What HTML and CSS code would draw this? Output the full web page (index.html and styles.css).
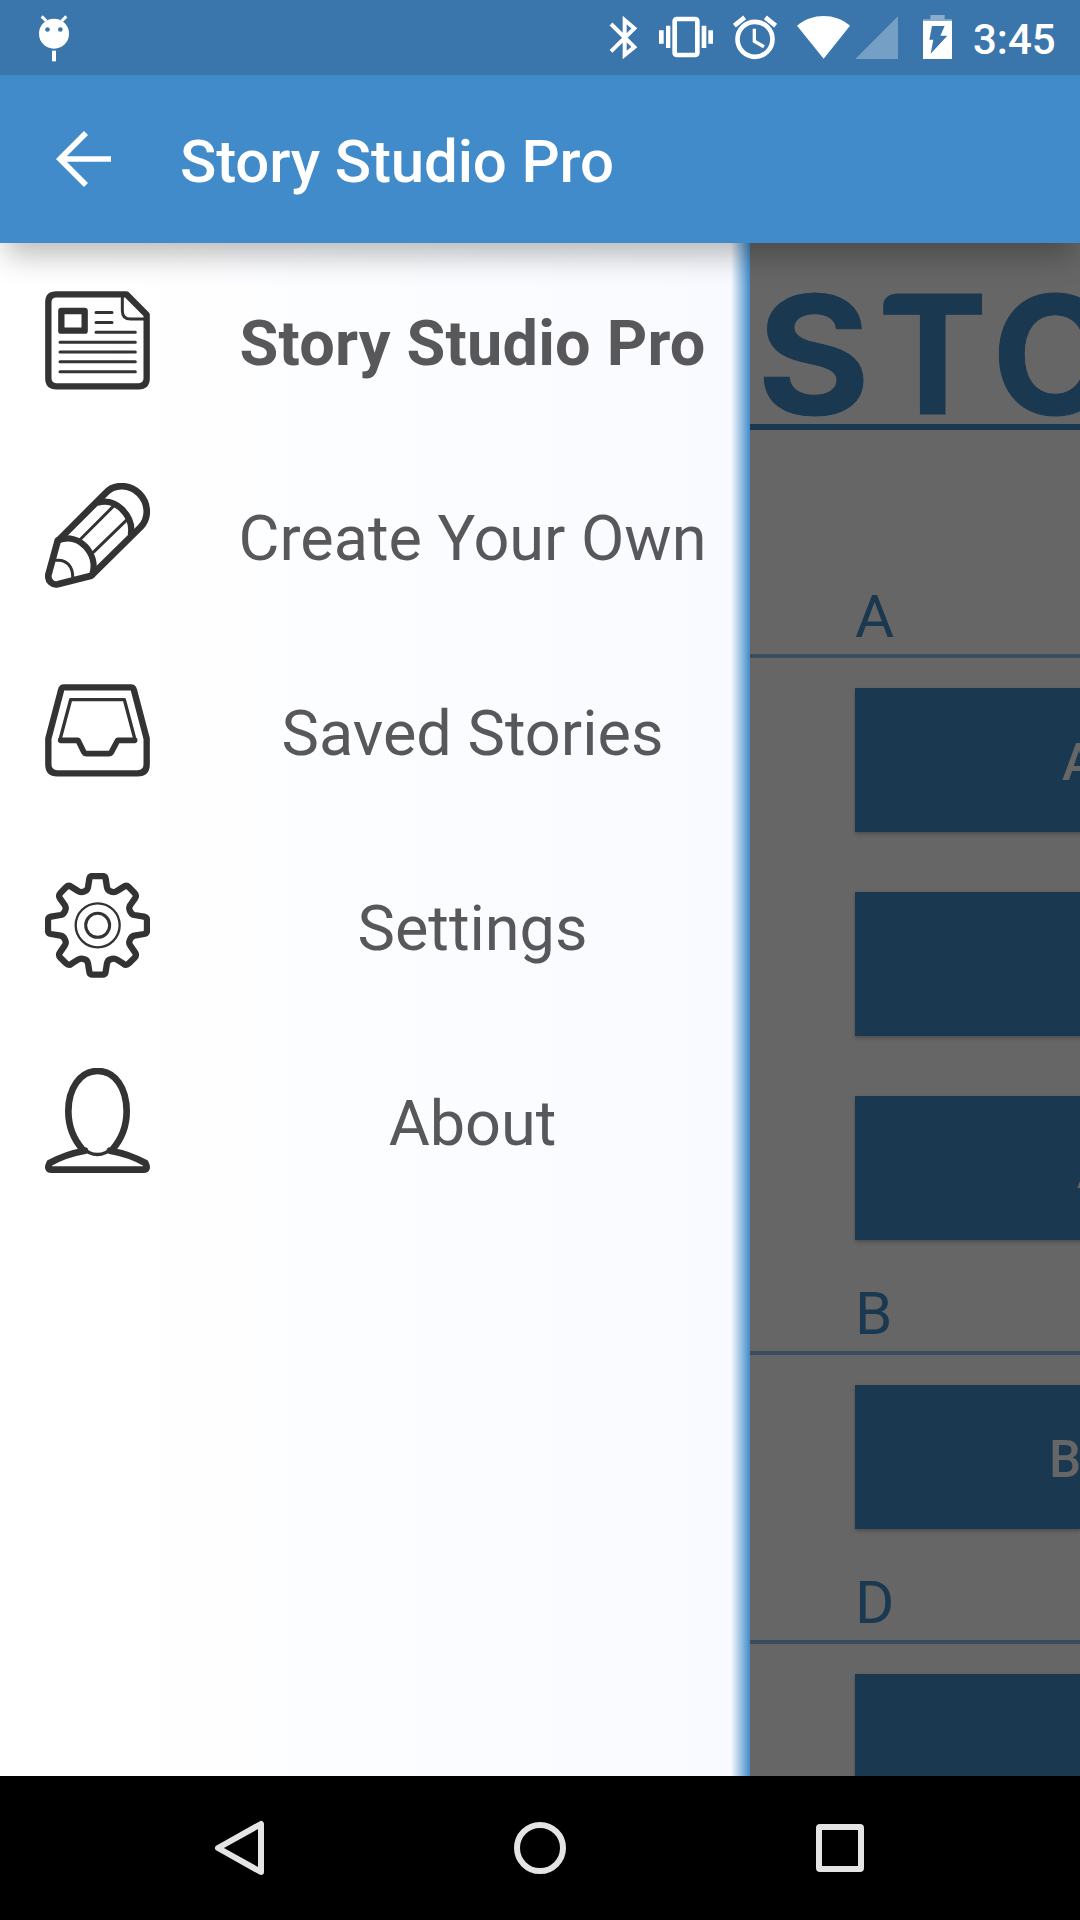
FILE: index.html
```html
<!DOCTYPE html>
<html lang="en">
<head>
<meta charset="utf-8">
<title>Story Studio Pro</title>
<link rel="stylesheet" href="styles.css">
</head>
<body>
<div class="screen">
  <header class="top">
    <div class="status">
      <svg class="debug" viewBox="108 0 108 225" fill="#fff"><circle cx="162" cy="101" r="45"/><path d="M125 49l14 14M199 49l-14 14" stroke="#fff" stroke-width="9"/><path d="M156 152h12v32h-12z"/><circle cx="142.500" cy="88.500" r="7" fill="#3a76ac"/><circle cx="181" cy="88.500" r="7" fill="#3a76ac"/></svg>
      <div class="tray">
        <svg class="bluetooth" viewBox="84 0 90 225" fill="none" stroke="#fff" stroke-width="12"><path d="M93 72l70 69-29 24V60l29 25-70 69"/></svg>
        <svg class="vibrate" viewBox="231 0 174 225" fill="#fff"><rect x="284" y="57" width="68" height="108" rx="6" fill="none" stroke="#fff" stroke-width="14"/><path d="M237 91h14v40h-14zM258 77h13v67h-13zM365 77h14v67h-14zM385 91h14v40h-14z"/></svg>
        <svg class="alarm" viewBox="459 0 132 225" fill="none" stroke="#fff"><circle cx="525" cy="118" r="52.500" stroke-width="14"/><path d="M463 77l31-25M587 77l-31-25" stroke-width="14"/><path d="M523 86v38l29 16" stroke-width="10"/></svg>
        <svg class="wifi" viewBox="648 0 165 225" fill="#fff"><path d="M651 77C673 58 702 48 731 48s57 10 79 29l-79 99z"/></svg>
        <svg class="signal" viewBox="825 0 132 225" fill="#fff"><path d="M954 49v128H826z" opacity=".3"/></svg>
        <svg class="battery" viewBox="1026 0 93 225"><path d="M1051 45h43v13h22v6h-87v-6h22z" fill="#fff" opacity=".4"/><path d="M1029 63h87v114h-87z" fill="#fff"/><path d="M1056 78h38l-13 29h21l-50 54 8-42h-12z" fill="#3a76ac"/></svg>
        <span class="clock">3:45</span>
      </div>
    </div>
    <div class="appbar">
      <svg class="back" viewBox="168 225 168 504" fill="none" stroke="#fff" stroke-width="17"><path d="M333 477H186M258 399l-78 78 78 78"/></svg>
      <h1 class="title">Story Studio Pro</h1>
    </div>
  </header>
  <main class="body">
    <nav class="drawer">
      <a class="item active">
        <svg class="icon" viewBox="45 54 315 315"><path d="M77 73H289l61 61V325q0 24-24 24H79q-24 0-24-24V97q0-24 24-24z" stroke-width="19"/><path d="M277 76v46q0 25 25 25h45" stroke-width="9"/><rect x="94" y="123" width="70" height="59" stroke-width="19"/><path d="M198 127.500h48M198 157.500h48M198 187h118M90 216.500h226M90 246h226M90 275.500h226M90 305h226" stroke-width="9"/></svg>
        <span class="label">Story Studio Pro</span>
      </a>
      <a class="item">
        <svg class="icon" viewBox="45 39 315 315"><path d="M83 213L226 70C252 40 300 42 328 71s30 73 4 100L184 317 83 343C68 346 53 334 55 315z" stroke-width="20"/><path d="M206 97c28-6 51 2 70 21s31 44 27 72" stroke-width="19"/><path d="M84 211c32-12 62-3 82 18s31 52 21 85" stroke-width="19"/><path d="M152 207L249 110M192 245L291 149M78 271c32-4 52 20 50 54" stroke-width="9"/></svg>
        <span class="label">Create Your Own</span>
      </a>
      <a class="item">
        <svg class="icon" viewBox="45 24 315 315"><path d="M102 52h200q8 0 10 9l38 145v77q0 27-27 27H82q-27 0-27-27v-77L93 61q2-9 9-9z" stroke-width="19"/><path d="M90 209L122 89h161l32 120" stroke-width="10"/><path d="M92 211h52l17 34q3 6 9 6h66q6 0 9-6l18-34h51" stroke-width="17"/></svg>
        <span class="label">Saved Stories</span>
      </a>
      <a class="item">
        <svg class="icon" viewBox="45 39 315 315"><path d="M188 48h29q9 0 10 9l4 25q2 9 10 12 12 5 20-1l19-12q9-7 17 1l16 16q8 8 2 17l-14 20q-6 8-1 18 4 10 13 12l29 5q9 2 9 11v30q0 9-9 11l-29 5q-9 2-13 12-5 10 1 18l14 20q6 9-2 17l-16 16q-8 8-17 1l-19-12q-8-6-20-1-8 3-10 12l-4 25q-1 9-10 9h-29q-9 0-10-9l-4-25q-2-9-10-12-12-5-20 1l-19 12q-9 7-17-1l-16-16q-8-8-2-17l14-20q6-8 1-18-4-10-13-12l-29-5q-9-2-9-11v-30q0-9 9-11l29-5q9-2 13-12 5-10-1-18l-14-20q-6-9 2-17l16-16q8-8 17-1l19 12q8 6 20 1 8-3 10-12l4-25q1-9 10-9z" stroke-width="19"/><circle cx="203" cy="196" r="66" stroke-width="7"/><circle cx="203" cy="196" r="36" stroke-width="9"/></svg>
        <span class="label">Settings</span>
      </a>
      <a class="item">
        <svg class="icon" viewBox="45 54 315 315"><path d="M158 299C131 268 115 226 115 184 115 116 150 63 203 63s87 53 87 121c0 42-16 84-43 115" stroke-width="20"/><path d="M158 294c26 26 62 26 89 0" stroke-width="10"/><path d="M165 302C125 309 89 322 59 339q-10 20 5 20H341q15 0 5-20C316 322 281 309 240 302" stroke-width="20"/></svg>
        <span class="label">About</span>
      </a>
    </nav>
    <section class="content">
      <div class="banner"><span class="ess">S</span><span class="tee">T</span><span>O</span></div>
      <h2 class="group first">A</h2>
      <div class="list">
        <div class="button a1">A</div>
        <div class="button"></div>
        <div class="button a3">A</div>
      </div>
      <h2 class="group">B</h2>
      <div class="list">
        <div class="button b1">B</div>
      </div>
      <h2 class="group">D</h2>
      <div class="list">
        <div class="button"></div>
      </div>
    </section>
  </main>
  <footer class="navbar">
    <svg viewBox="210 1776 60 144"><path d="M261 1824v48L218 1848z"/></svg>
    <svg viewBox="510 1776 60 144"><circle cx="540" cy="1848" r="23"/></svg>
    <svg viewBox="810 1776 60 144"><rect x="819" y="1827" width="42" height="42" rx="1"/></svg>
  </footer>
</div>
</body>
</html>
```

FILE: styles.css
```css
* { box-sizing: border-box; }
body { margin: 0; font-family: Roboto, sans-serif; }
svg { display: block; flex: none; }

.screen {
  width: 1080px;
  height: 1920px;
  display: flex;
  flex-direction: column;
  overflow: hidden;
}

.top {
  position: relative;
  z-index: 2;
  flex: none;
  box-shadow: 0 18px 28px -6px rgba(0, 0, 0, .27);
}
.status {
  height: 75px;
  padding: 0 25px 0 36px;
  display: flex;
  justify-content: space-between;
  background: #3a76ac;
}
.status svg { height: 75px; }
.tray { display: flex; }
.debug { width: 36px; }
.bluetooth { width: 30px; }
.vibrate { width: 58px; margin-left: 19px; }
.alarm { width: 44px; margin-left: 18px; }
.wifi { width: 55px; margin-left: 19px; }
.signal { width: 44px; margin-left: 4px; }
.battery { width: 31px; margin-left: 23px; }
.clock {
  width: 102px;
  padding-left: 20px;
  color: #fff;
  font-size: 42px;
  font-weight: 500;
  line-height: 80px;
  height: 75px;
  white-space: nowrap;
}

.appbar {
  height: 168px;
  padding-left: 56px;
  display: flex;
  align-items: center;
  background: #428bca;
}
.back { width: 56px; height: 168px; }
.title {
  margin: 5px 0 0 68px;
  color: #fff;
  font-size: 60px;
  font-weight: 500;
  letter-spacing: -.15px;
  line-height: 70px;
}

.body {
  height: 1533px;
  display: flex;
  overflow: hidden;
}
.drawer {
  width: 750px;
  flex: none;
  background:
    linear-gradient(90deg, rgba(66, 139, 202, 0), #428bca) right / 19px 100% no-repeat,
    linear-gradient(90deg, #fff 12%, #f8faff);
}
.item {
  height: 195px;
  padding: 0 36px 0 45px;
  display: flex;
  align-items: center;
}
.icon {
  width: 105px;
  height: 105px;
  fill: none;
  stroke: #333;
  stroke-linecap: round;
  stroke-linejoin: round;
}
.label {
  flex: 1;
  padding: 6px 0 0 81px;
  color: #58585a;
  font-size: 63px;
  line-height: 74px;
  text-align: center;
  white-space: nowrap;
}
.active .label {
  font-weight: 700;
  letter-spacing: .2px;
}

.content {
  flex: 1;
  min-width: 0;
  background: #666;
  overflow: hidden;
}
.banner {
  height: 187px;
  padding: 12px 0 0 7px;
  border-bottom: 6px solid #1b3851;
  color: #1b3851;
  font: bold 164.6px/200px Inter, sans-serif;
  -webkit-text-stroke: 1px #1b3851;
  white-space: nowrap;
}
.ess {
  display: inline-block;
  margin-right: 13px;
  transform: scaleX(1.05);
  transform-origin: left;
}
.tee { position: relative; letter-spacing: 4px; }
.tee::before {
  content: "";
  position: absolute;
  left: -1px;
  top: 32px;
  width: 18px;
  height: 19px;
  background: radial-gradient(circle at 100% 100%, transparent 11.5px, #666 12.5px);
}
.group {
  height: 115px;
  margin: 0;
  padding: 39px 0 0 105px;
  border-bottom: 4px solid #3b4d5c;
  color: #1b3851;
  font-size: 60px;
  font-weight: 400;
  line-height: 70px;
}
.group.first { margin-top: 113px; }
.list {
  padding: 30px 0 0 105px;
  display: grid;
  gap: 60px;
}
.button {
  height: 144px;
  background: #1b3851;
  box-shadow: 0 2px 4px rgba(0, 0, 0, .25);
  color: #666;
  font-size: 51px;
  font-weight: 500;
  line-height: 150px;
  white-space: nowrap;
}
.a1 { padding-left: 207px; }
.a3 { padding-left: 222px; }
.b1 { padding-left: 194px; }

.navbar {
  height: 144px;
  padding: 0 210px;
  display: flex;
  justify-content: space-between;
  background: #000;
}
.navbar svg {
  width: 60px;
  height: 144px;
  fill: none;
  stroke: #e4e4e4;
  stroke-width: 6;
  stroke-linejoin: round;
}
```
